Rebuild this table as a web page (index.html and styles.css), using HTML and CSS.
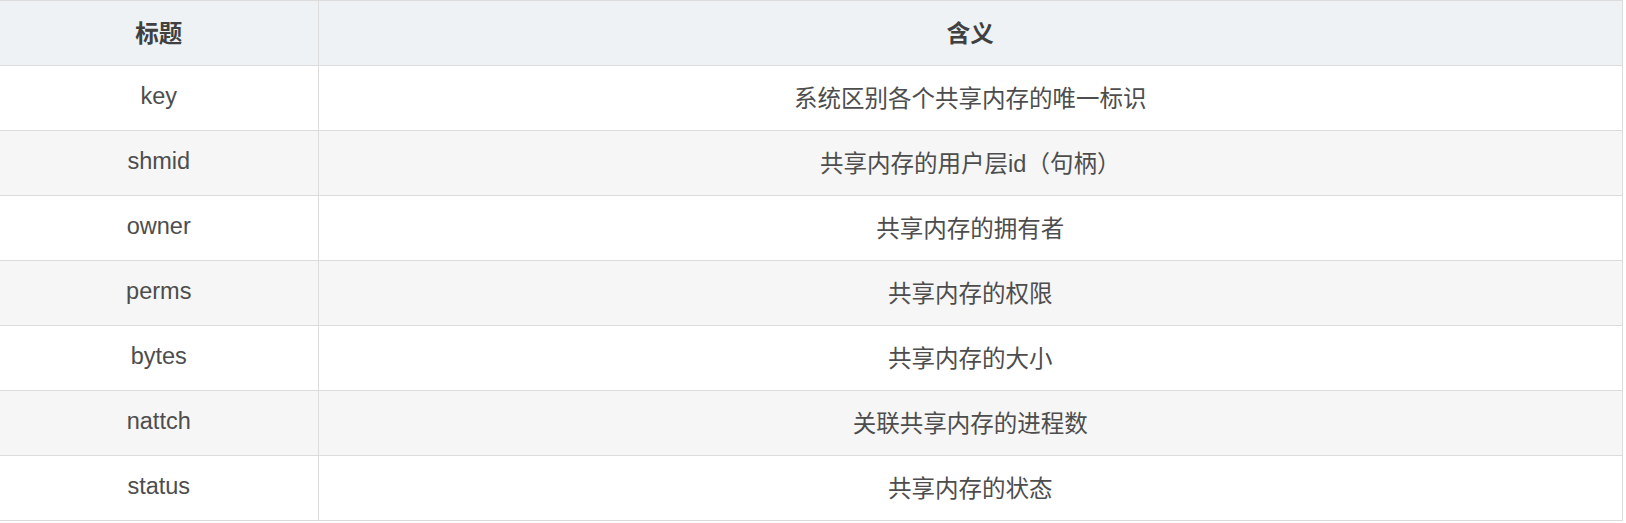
FILE: index.html
```html
<!DOCTYPE html>
<html lang="zh">
<head>
<meta charset="utf-8">
<title>共享内存</title>
<link rel="stylesheet" href="styles.css">
</head>
<body>
<table class="tbl">
  <colgroup><col class="c1"><col class="c2"></colgroup>
  <thead>
    <tr><th>标题</th><th>含义</th></tr>
  </thead>
  <tbody>
    <tr><td>key</td><td>系统区别各个共享内存的唯一标识</td></tr>
    <tr><td>shmid</td><td>共享内存的用户层id（句柄）</td></tr>
    <tr><td>owner</td><td>共享内存的拥有者</td></tr>
    <tr><td>perms</td><td>共享内存的权限</td></tr>
    <tr><td>bytes</td><td>共享内存的大小</td></tr>
    <tr><td>nattch</td><td>关联共享内存的进程数</td></tr>
    <tr><td>status</td><td>共享内存的状态</td></tr>
  </tbody>
</table>
</body>
</html>
```
FILE: styles.css
```css
html, body {
  margin: 0;
  padding: 0;
  background: #fff;
}
.tbl {
  border-collapse: collapse;
  width: 1623px;
  table-layout: fixed;
  font-family: "Liberation Sans", Arial, "Noto Sans CJK SC", sans-serif;
  font-size: 23.5px;
  color: #4d4d4d;
}
.c1 { width: 318px; }
.tbl th, .tbl td {
  border: 1px solid #dcdcdc;
  height: 65px;
  padding: 0 0 3px;
  text-align: center;
  vertical-align: middle;
  box-sizing: border-box;
}
.tbl th:first-child, .tbl td:first-child {
  border-left: none;
}
.tbl th {
  background: #eef2f5;
  font-weight: bold;
  color: #404040;
}
.tbl tbody tr:nth-child(even) td {
  background: #f6f6f6;
}
```
